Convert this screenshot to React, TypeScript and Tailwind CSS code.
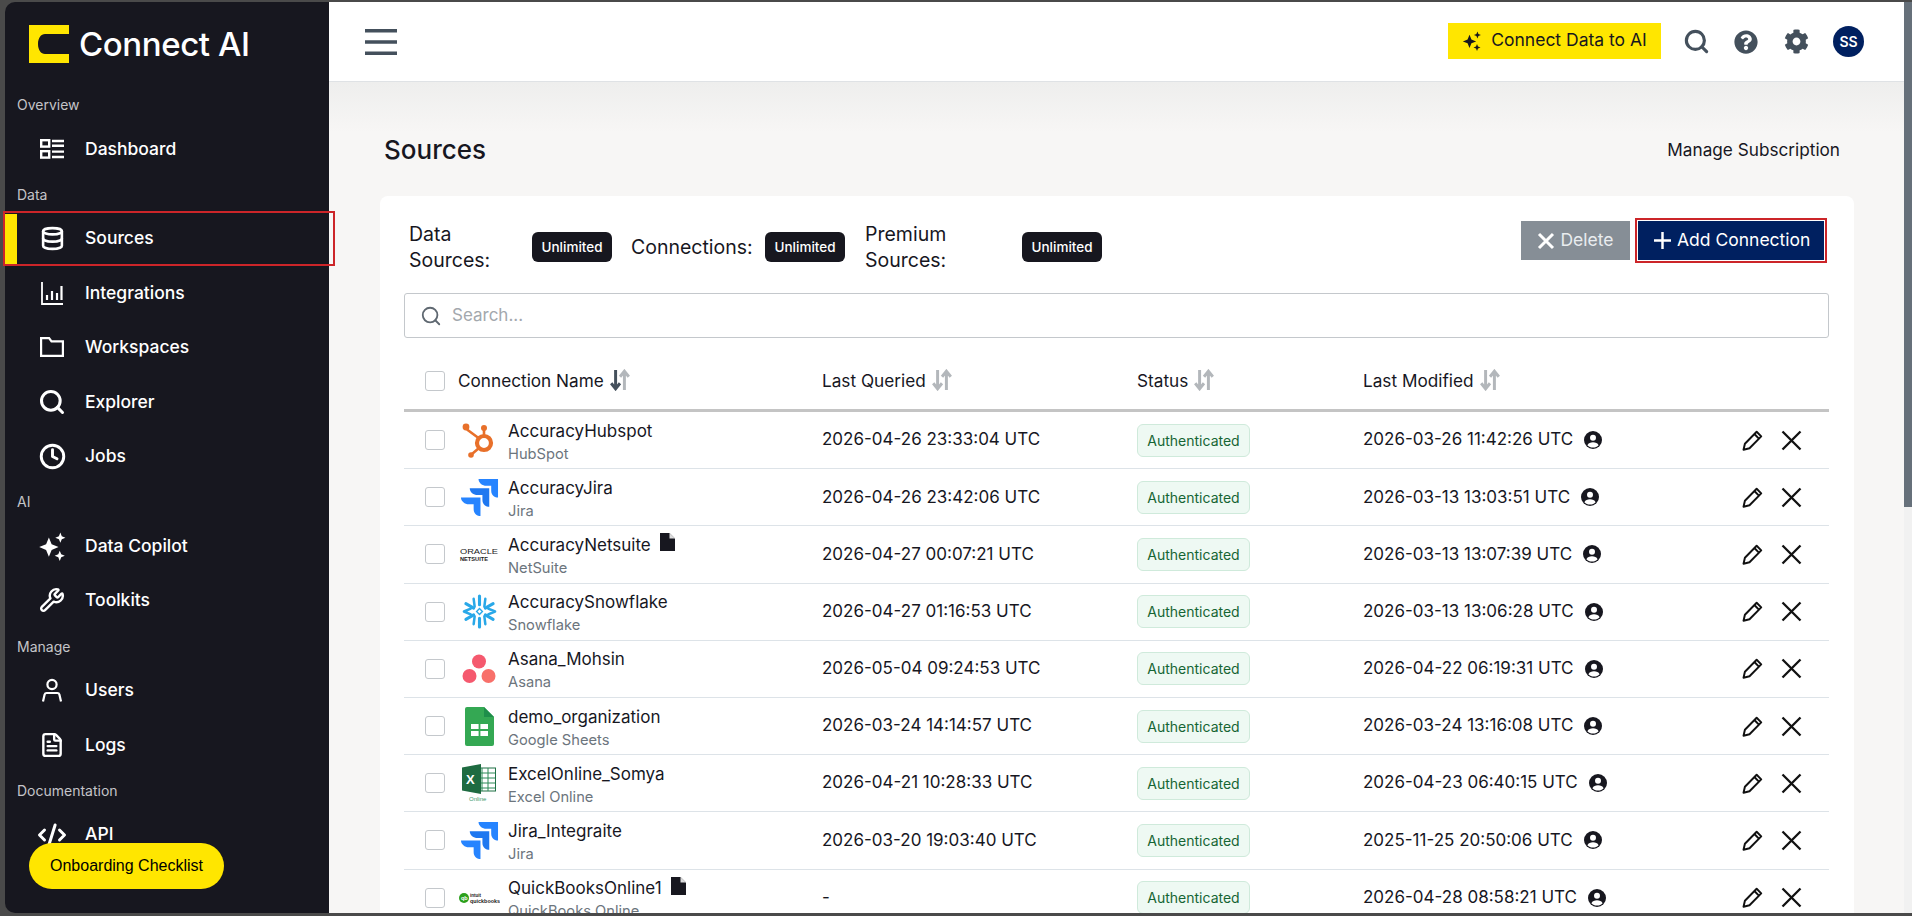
import React from "react";
import { Database, Search, Clock, Wrench, FileText, CodeXml } from "lucide-react";
import { FaCog, FaQuestionCircle } from "react-icons/fa";

const Sparkles = ({ className = "" }: { className?: string }) => (
  <svg viewBox="0 0 24 24" className={className} fill="currentColor">
    <path d="M9 4.500l2.300 5.700L17 12.500l-5.700 2.300L9 20.500l-2.300-5.700L1 12.500l5.700-2.300z" />
    <path d="M18.500 0.500l1.200 3 3 1.200-3 1.200-1.200 3-1.200-3-3-1.200 3-1.200z" />
    <path d="M18 15.500l1.200 3 3 1.200-3 1.200-1.200 3-1.200-3-3-1.200 3-1.200z" />
  </svg>
);

const DashboardIcon = () => (
  <svg viewBox="0 0 24 20" className="w-[24px] h-[20px]" fill="none" stroke="currentColor" strokeWidth="2.400">
    <rect x="1.200" y="1.200" width="8" height="6.400" />
    <rect x="1.200" y="12.200" width="8" height="6.400" />
    <path d="M12 2h12M12 6.800h12M12 12.600h12M12 18h12" />
  </svg>
);

const IntegrationsIcon = () => (
  <svg viewBox="0 0 24 24" className="w-[24px] h-[24px]" fill="none" stroke="currentColor" strokeWidth="2.200">
    <path d="M2 1v22h21" strokeWidth="1.800" />
    <path d="M7 19v-5M12 19v-9M17 19v-7M21.500 19V5" />
  </svg>
);

const FolderIcon = () => (
  <svg viewBox="0 0 24 20" className="w-[24px] h-[20px]" fill="none" stroke="currentColor" strokeWidth="2.200">
    <path d="M1.100 1.100h8l2.400 3.200h11.400v14.600H1.100z" />
  </svg>
);

const UserIcon = () => (
  <svg viewBox="0 0 24 24" className="w-[24px] h-[24px]" fill="none" stroke="currentColor" strokeWidth="2.200">
    <circle cx="12" cy="6.500" r="4.600" />
    <path d="M3 23.500l1.600-7c.3-1 1-1.500 2-1.500h10.800c1 0 1.700.5 2 1.500l1.600 7" />
  </svg>
);

const MenuIcon = () => (
  <svg viewBox="0 0 32 26" className="w-[32px] h-[26px] text-[#44505c]" fill="currentColor">
    <rect x="0" y="0" width="32" height="3.500" />
    <rect x="0" y="11.250" width="32" height="3.500" />
    <rect x="0" y="22.500" width="32" height="3.500" />
  </svg>
);

const SortIcon = ({ active = false }: { active?: boolean }) => (
  <svg viewBox="0 0 20 20" className="w-[22px] h-[22px] ml-[5px]" fill="none" strokeWidth="2.700">
    <path d="M6 1v16M2 13l4 5 4-5" stroke={active ? "#44505c" : "#b3b7bb"} />
    <path d="M14 19V3M10 7l4-5 4 5" stroke="#b3b7bb" />
  </svg>
);

const PencilIcon = () => (
  <svg viewBox="0 0 20 20" className="w-[23px] h-[23px]" fill="none" stroke="#111" strokeWidth="1.700">
    <path d="M2.200 18l1.200-5.200L13.600 2.400l4 4L7.400 16.700z" strokeLinejoin="round" />
    <path d="M11.600 4.400l4 4" />
  </svg>
);

const CloseIcon = () => (
  <svg viewBox="0 0 21 21" className="w-[21px] h-[21px]" fill="none" stroke="#111" strokeWidth="2.300">
    <path d="M1.500 1.500l18 18M19.500 1.500l-18 18" />
  </svg>
);

const OwnerIcon = () => (
  <svg viewBox="0 0 18 18" className="w-[18px] h-[18px] shrink-0">
    <circle cx="9" cy="9" r="9" fill="#17171f" />
    <circle cx="9" cy="6.800" r="3" fill="#fff" />
    <path d="M3.400 14.200c1-2.200 3-3 5.600-3s4.600.8 5.600 3C13.200 15.800 11.200 16.600 9 16.600s-4.200-.8-5.600-2.400z" fill="#fff" />
  </svg>
);

const FileBadge = () => (
  <svg viewBox="0 0 15 18" className="w-[15px] h-[18px] ml-[9px] -mt-[5px]" fill="#17171f">
    <path d="M0 0h9.500L15 5.500V18H0z" />
    <path d="M9.500 0v5.500H15z" fill="#fff" opacity=".85" />
  </svg>
);

const HubspotLogo = () => (
  <svg viewBox="0 0 36 36" className="w-[36px] h-[36px]" fill="none" stroke="#e8702a">
    <circle cx="23" cy="21" r="7" strokeWidth="4.200" />
    <path d="M23 14V7M17.500 16L6 7.500M18 26l-7 6" strokeWidth="2.600" />
    <circle cx="5" cy="5" r="3.400" fill="#e8702a" stroke="none" />
    <circle cx="23" cy="6" r="3" fill="#e8702a" stroke="none" />
    <circle cx="10" cy="33" r="2.800" fill="#e8702a" stroke="none" />
  </svg>
);

const JiraLogo = () => (
  <svg viewBox="0 0 40 40" className="w-[39px] h-[39px]">
    <path d="M19 1h20v19c-3 0-7-2-7-7V8h-5c-4 0-8-3-8-7z" fill="#2684ff" />
    <path d="M10 10.500h20v19c-3 0-7-2-7-7v-5h-5c-4 0-8-3-8-7z" fill="#1f78f0" />
    <path d="M1 20h20v19c-3 0-7-2-7-7v-5H9c-4 0-8-3-8-7z" fill="#2684ff" />
  </svg>
);

const OracleLogo = () => (
  <svg viewBox="0 0 40 14" className="w-[40px] h-[14px]">
    <text x="1" y="7" fontSize="8" textLength="38" lengthAdjust="spacingAndGlyphs" fontFamily="Liberation Sans, sans-serif" fill="#222">ORACLE</text>
    <text x="1" y="13.500" fontSize="5.500" fontWeight="700" textLength="28" lengthAdjust="spacingAndGlyphs" fontFamily="Liberation Sans, sans-serif" fill="#222">NETSUITE</text>
  </svg>
);

const SnowflakeLogo = () => (
  <svg viewBox="0 0 36 36" className="w-[35px] h-[35px]" fill="none" stroke="#29a8e8" strokeWidth="3.200" strokeLinecap="round">
    <path d="M18 2v9M18 25v9M4 10l8 4.500M24 21.500l8 4.500M32 10l-8 4.500M12 21.500l-8 4.500" />
    <path d="M12 5l1 8M24 5l-1 8M2 18l7-3M34 18l-7-3M2 18l7 3M34 18l-7 3M12 31l1-8M24 31l-1-8" strokeWidth="2.600" />
    <path d="M18 15l3 3-3 3-3-3z" strokeWidth="1.400" />
  </svg>
);

const AsanaLogo = () => (
  <svg viewBox="0 0 34 30" className="w-[34px] h-[30px]">
    <circle cx="17" cy="7.500" r="7" fill="#f5596e" />
    <circle cx="7.500" cy="22" r="7" fill="#f5596e" />
    <circle cx="26.500" cy="22" r="7" fill="#f8706a" />
  </svg>
);

const SheetsLogo = () => (
  <svg viewBox="0 0 29 39" className="w-[29px] h-[39px]">
    <path d="M2 0h17l10 10v27a2 2 0 0 1-2 2H2a2 2 0 0 1-2-2V2a2 2 0 0 1 2-2z" fill="#34a853" />
    <path d="M19 0l10 10H19z" fill="#1e8e4a" />
    <rect x="6" y="17" width="17" height="12" fill="#fff" />
    <path d="M14.500 17v12M6 23h17" stroke="#34a853" strokeWidth="1.800" />
  </svg>
);

const ExcelLogo = () => (
  <svg viewBox="0 0 34 38" className="w-[34px] h-[38px]">
    <rect x="14" y="4" width="19.500" height="23" fill="#fff" stroke="#1e7145" strokeWidth="1" />
    <path d="M20 4v23M26 4v23M14 9h19M14 14h19M14 19h19M14 24h19" stroke="#2c8a57" strokeWidth="1" />
    <path d="M0 3.500L19 0v30L0 26.500z" fill="#1e6b41" />
    <text x="4" y="20" fontSize="13" fontWeight="700" fill="#fff" fontFamily="Liberation Sans, sans-serif">X</text>
    <text x="7" y="37" fontSize="6" fill="#3c9a6a" fontFamily="Liberation Sans, sans-serif">Online</text>
  </svg>
);

const QuickbooksLogo = () => (
  <svg viewBox="0 0 41 12" className="w-[41px] h-[12px]">
    <circle cx="5" cy="6" r="5" fill="#2ca01c" />
    <text x="2" y="8" fontSize="5.500" fontWeight="700" fill="#fff" fontFamily="Liberation Sans, sans-serif">qb</text>
    <text x="11" y="5" fontSize="4.500" fontWeight="700" fill="#222" fontFamily="Liberation Sans, sans-serif">intuit</text>
    <text x="11" y="10.500" fontSize="5.500" fontWeight="700" textLength="30" lengthAdjust="spacingAndGlyphs" fill="#222" fontFamily="Liberation Sans, sans-serif">quickbooks</text>
  </svg>
);

const SectionLabel = ({ children }: { children: React.ReactNode }) => (
  <div className="h-5 mt-[9px] mb-[6.500px] pl-[12px] text-[14px] leading-5 text-[#c4c4c8]">{children}</div>
);

const NavItem = ({ icon, label, active = false }: { icon: React.ReactNode; label: string; active?: boolean }) => (
  <div className="relative h-[54.400px] flex items-center text-white">
    {active && <div className="absolute left-0 top-[2.200px] w-[12px] h-[50px] bg-[#ffe600]" />}
    {active && <div className="absolute -left-[2px] top-0 w-[332px] h-[54.400px] border-2 border-[#cc2529]" />}
    <div className="w-[80px] pl-[35px] flex items-center shrink-0">
      <div className="w-[24px] flex items-center justify-center [&>svg]:shrink-0">{icon}</div>
    </div>
    <span className="text-[17.500px] font-medium">{label}</span>
  </div>
);

const Sidebar = () => (
  <aside className="relative z-10 w-[324px] h-[911px] shrink-0 bg-[#17171f] rounded-tl-[10px] rounded-bl-[10px]">
    <div className="h-[84px] flex items-start pt-[23px] pl-[24px]">
      <svg viewBox="0 0 40 38" className="w-[40px] h-[38px]">
        <path d="M0 0h40v9H16c-4 0-7 4-7 10s3 10 7 10h24v9H0z" fill="#ffe600" />
      </svg>
      <span className="ml-[10px] -mt-[1px] text-[33px] leading-[40px] font-medium tracking-[-0.4px] text-white">Connect AI</span>
    </div>
    <SectionLabel>Overview</SectionLabel>
    <NavItem icon={<DashboardIcon />} label="Dashboard" />
    <SectionLabel>Data</SectionLabel>
    <NavItem icon={<Database size={25} strokeWidth={2.5} />} label="Sources" active />
    <NavItem icon={<IntegrationsIcon />} label="Integrations" />
    <NavItem icon={<FolderIcon />} label="Workspaces" />
    <NavItem icon={<Search size={28} strokeWidth={2.6} />} label="Explorer" />
    <NavItem icon={<Clock size={27} strokeWidth={2.6} />} label="Jobs" />
    <SectionLabel>AI</SectionLabel>
    <NavItem icon={<Sparkles className="w-[29px] h-[29px]" />} label="Data Copilot" />
    <NavItem icon={<Wrench size={26} strokeWidth={2.2} />} label="Toolkits" />
    <SectionLabel>Manage</SectionLabel>
    <NavItem icon={<UserIcon />} label="Users" />
    <NavItem icon={<FileText size={26} strokeWidth={2.2} />} label="Logs" />
    <SectionLabel>Documentation</SectionLabel>
    <NavItem icon={<CodeXml size={30} strokeWidth={2.4} />} label="API" />
    <button className="absolute left-[24px] top-[841px] w-[195px] h-[46px] rounded-full bg-[#ffe600] text-[16px] text-black font-['Liberation_Sans',sans-serif]">
      Onboarding Checklist
    </button>
  </aside>
);

const Header = () => (
  <header className="h-[80px] shrink-0 bg-white border-b border-[#dfe2e5] flex items-center pl-[36px] pr-[40px]">
    <MenuIcon />
    <div className="ml-auto flex items-center">
      <button className="w-[213px] h-[36px] -mt-[2px] bg-[#ffe600] flex items-center justify-center gap-[9px] text-[17.500px] text-[#17171f]">
        <Sparkles className="w-[20px] h-[20px]" />
        Connect Data to AI
      </button>
      <Search size={27} strokeWidth={2.8} className="ml-[22px] text-[#44505c]" />
      <FaQuestionCircle size={24} className="ml-[24px] text-[#44505c]" />
      <FaCog size={25} className="ml-[26px] text-[#44505c]" />
      <div className="ml-[24px] w-[31px] h-[31px] rounded-full bg-[#002060] text-white text-[14px] font-semibold flex items-center justify-center">SS</div>
    </div>
  </header>
);

const Stat = ({ label, width }: { label: React.ReactNode; width: string }) => (
  <div className="flex items-center">
    <div className={`${width} text-[19.500px] leading-[26px] text-[#17171f]`}>{label}</div>
    <div className="w-[80px] h-[30px] rounded-[6px] bg-[#17171f] text-white text-[13.500px] font-medium flex items-center justify-center">Unlimited</div>
  </div>
);

type Row = {
  name: string;
  type: string;
  queried: string;
  modified: string;
  logo: React.ReactNode;
  file?: boolean;
};

const rows: Row[] = [
  { name: "AccuracyHubspot", type: "HubSpot", queried: "2026-04-26 23:33:04 UTC", modified: "2026-03-26 11:42:26 UTC", logo: <HubspotLogo /> },
  { name: "AccuracyJira", type: "Jira", queried: "2026-04-26 23:42:06 UTC", modified: "2026-03-13 13:03:51 UTC", logo: <JiraLogo /> },
  { name: "AccuracyNetsuite", type: "NetSuite", queried: "2026-04-27 00:07:21 UTC", modified: "2026-03-13 13:07:39 UTC", logo: <OracleLogo />, file: true },
  { name: "AccuracySnowflake", type: "Snowflake", queried: "2026-04-27 01:16:53 UTC", modified: "2026-03-13 13:06:28 UTC", logo: <SnowflakeLogo /> },
  { name: "Asana_Mohsin", type: "Asana", queried: "2026-05-04 09:24:53 UTC", modified: "2026-04-22 06:19:31 UTC", logo: <AsanaLogo /> },
  { name: "demo_organization", type: "Google Sheets", queried: "2026-03-24 14:14:57 UTC", modified: "2026-03-24 13:16:08 UTC", logo: <SheetsLogo /> },
  { name: "ExcelOnline_Somya", type: "Excel Online", queried: "2026-04-21 10:28:33 UTC", modified: "2026-04-23 06:40:15 UTC", logo: <ExcelLogo /> },
  { name: "Jira_Integraite", type: "Jira", queried: "2026-03-20 19:03:40 UTC", modified: "2025-11-25 20:50:06 UTC", logo: <JiraLogo /> },
  { name: "QuickBooksOnline1", type: "QuickBooks Online", queried: "-", modified: "2026-04-28 08:58:21 UTC", logo: <QuickbooksLogo />, file: true },
];

const Checkbox = () => <div className="w-[20px] h-[20px] shrink-0 rounded-[3px] border border-[#c4c8cc] bg-white" />;

const TableRow = ({ row }: { row: Row }) => (
  <div className="h-[57.200px] shrink-0 flex items-center border-b border-[#dde3e8] text-[17px] text-[#17171f]">
    <div className="w-[54px] pl-[21px] shrink-0"><Checkbox /></div>
    <div className="w-[42px] shrink-0 flex items-center justify-center">{row.logo}</div>
    <div className="w-[322px] pl-[8px] pt-[3px] shrink-0">
      <div className="leading-[24px] flex items-center">
        {row.name}
        {row.file && <FileBadge />}
      </div>
      <div className="leading-[22px] text-[14.700px] text-[#6c757d]">{row.type}</div>
    </div>
    <div className="w-[315px] shrink-0">{row.queried}</div>
    <div className="w-[226px] shrink-0">
      <span className="inline-flex items-center justify-center w-[113px] h-[33px] rounded-[6px] border border-[#cfeadb] bg-[#eef9f3] text-[#166534] text-[14px]">Authenticated</span>
    </div>
    <div className="w-[378px] shrink-0 flex items-center gap-[11px]">
      {row.modified}
      <OwnerIcon />
    </div>
    <div className="flex items-center gap-[17px]">
      <PencilIcon />
      <CloseIcon />
    </div>
  </div>
);

export default function App() {
  return (
    <div className="w-[1912px] h-[916px] overflow-hidden bg-[#4a4a4a] flex flex-col pt-[2px] pb-[3px] pl-[5px] font-['Inter',sans-serif]">
      <div className="flex h-[911px]">
        <Sidebar />
        <div className="flex-1 min-w-0 flex flex-col bg-[#f7f6f5]">
          <Header />
          <main className="flex-1 min-h-0 overflow-hidden bg-[linear-gradient(#eeeeed,#f7f6f5_50px)] pl-[51px] pr-[50px]">
            <div className="h-[114px] flex items-center justify-between pl-[4px] pr-[14px] pt-[46px] pb-[25px]">
              <h1 className="text-[26px] font-medium text-[#17171f]">Sources</h1>
              <span className="text-[17.200px] text-[#17171f]">Manage Subscription</span>
            </div>
            <section className="bg-white rounded-t-[8px] pl-[24px] pr-[25px] pb-[40px] h-[800px]">
              <div className="h-[97px] flex items-center pl-[5px] pt-[29px] pb-[24px]">
                <Stat label={<>Data<br />Sources:</>} width="w-[123px]" />
                <div className="w-[19px]" />
                <Stat label="Connections:" width="w-[134px]" />
                <div className="w-[20px]" />
                <Stat label={<>Premium<br />Sources:</>} width="w-[157px]" />
                <div className="ml-auto flex items-center mr-[2px] mb-[13px]">
                  <button className="w-[109px] h-[39px] bg-[#868e96] text-[#e9ecef] text-[17.500px] flex items-center justify-center gap-[5px]">
                    <svg viewBox="0 0 18 18" className="w-[18px] h-[18px]" fill="none" stroke="#fff" strokeWidth="3">
                      <path d="M2 2l14 14M16 2L2 16" />
                    </svg>
                    Delete
                  </button>
                  <div className="ml-[5px] border-2 border-[#cc2529] p-[1px] bg-white">
                    <button className="w-[186px] h-[39px] bg-[#002060] text-white text-[17.500px] flex items-center pl-[16px] gap-[6px]">
                      <svg viewBox="0 0 18 18" className="w-[17px] h-[17px]" fill="none" stroke="#fff" strokeWidth="2.600">
                        <path d="M9 0v18M0 9h18" />
                      </svg>
                      Add Connection
                    </button>
                  </div>
                </div>
              </div>
              <div className="h-[45px] rounded-[3px] border border-[#c4c8cc] flex items-center pl-[15px] gap-[10px]">
                <Search size={22} strokeWidth={2} className="text-[#5f6871]" />
                <span className="text-[17px] text-[#a3a8ad]">Search...</span>
              </div>
              <div className="h-[74px] flex items-center pt-[14px] border-b-[3px] border-[#c4c4c4] text-[17.200px] text-[#17171f]">
                <div className="w-[54px] pl-[21px] shrink-0"><Checkbox /></div>
                <div className="w-[364px] shrink-0 flex items-center">Connection Name<SortIcon active /></div>
                <div className="w-[315px] shrink-0 flex items-center">Last Queried<SortIcon /></div>
                <div className="w-[226px] shrink-0 flex items-center">Status<SortIcon /></div>
                <div className="flex items-center">Last Modified<SortIcon /></div>
              </div>
              {rows.map((row) => (
                <TableRow key={row.name} row={row} />
              ))}
            </section>
          </main>
        </div>
        <div className="w-[8px] shrink-0 bg-[#f1f1f1] flex flex-col">
          <div className="h-[505px] bg-[#66707a]" />
        </div>
      </div>
    </div>
  );
}
